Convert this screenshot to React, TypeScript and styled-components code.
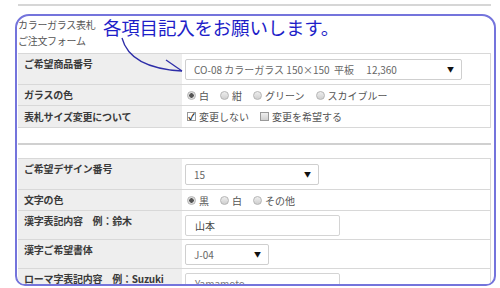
import React from 'react';
import styled, { createGlobalStyle } from 'styled-components';

const GlobalStyle = createGlobalStyle`
  html, body {
    margin: 0;
    padding: 0;
    background: #ffffff;
  }
  body {
    font-family: 'Noto Sans CJK JP', 'Liberation Sans', sans-serif;
    color: #333;
  }
`;

type Option = { label: string; checked?: boolean };

export default function App() {
  return (
    <>
      <GlobalStyle />
      <Page>
        <TopRule />
        <Frame>
          <Header>
            <div>カラーガラス表札</div>
            <div>ご注文フォーム</div>
          </Header>

          <Table>
            <Row $h={31}>
              <Label>ご希望商品番号</Label>
              <Cell>
                <Select $w={277}>
                  <span>{'CO-08 カラーガラス 150×150  平板　 12,360'}</span>
                  <Caret>▼</Caret>
                </Select>
              </Cell>
            </Row>
            <Row $h={21}>
              <Label $center>ガラスの色</Label>
              <Cell>
                <Choices
                  kind="radio"
                  options={[
                    { label: '白', checked: true },
                    { label: '紺' },
                    { label: 'グリーン' },
                    { label: 'スカイブルー' },
                  ]}
                />
              </Cell>
            </Row>
            <Row $h={22}>
              <Label $center>表札サイズ変更について</Label>
              <Cell>
                <Choices
                  kind="check"
                  options={[{ label: '変更しない', checked: true }, { label: '変更を希望する' }]}
                />
              </Cell>
            </Row>
          </Table>

          <Divider />

          <Table>
            <Row $h={31}>
              <Label>ご希望デザイン番号</Label>
              <Cell>
                <Select $w={134}>
                  <span>15</span>
                  <Caret>▼</Caret>
                </Select>
              </Cell>
            </Row>
            <Row $h={21}>
              <Label $center>文字の色</Label>
              <Cell>
                <Choices
                  kind="radio"
                  options={[{ label: '黒', checked: true }, { label: '白' }, { label: 'その他' }]}
                />
              </Cell>
            </Row>
            <Row $h={29}>
              <Label>漢字表記内容　例：鈴木</Label>
              <Cell>
                <Input $dark>山本</Input>
              </Cell>
            </Row>
            <Row $h={29}>
              <Label>漢字ご希望書体</Label>
              <Cell>
                <Select $w={84}>
                  <span>J-04</span>
                  <Caret>▼</Caret>
                </Select>
              </Cell>
            </Row>
            <Row $h={29}>
              <Label>ローマ字表記内容　例：Suzuki</Label>
              <Cell>
                <Input>Yamamoto</Input>
              </Cell>
            </Row>
          </Table>
        </Frame>

        <Note>各項目記入をお願いします。</Note>
        <Arrow width="500" height="288" viewBox="0 0 500 288">
          <path d="M122 38 C127 57 146 69 182 71" />
          <path d="M166 60 L182 71" />
        </Arrow>
      </Page>
    </>
  );
}

const Choices = ({ kind, options }: { kind: 'radio' | 'check'; options: Option[] }) => (
  <ChoiceRow>
    {options.map((o) => (
      <Choice key={o.label}>
        {kind === 'radio' ? <Radio $on={!!o.checked} /> : <Check $on={!!o.checked}>{o.checked ? '✓' : ''}</Check>}
        <span>{o.label}</span>
      </Choice>
    ))}
  </ChoiceRow>
);

const Page = styled.div`
  position: relative;
  width: 500px;
  height: 288px;
  overflow: hidden;
  background: #fff;
`;

const TopRule = styled.div`
  margin: 4px 9px 0 18px;
  height: 2px;
  background: #d6d6d6;
`;

const Frame = styled.div`
  box-sizing: border-box;
  margin: 8px 0 0 15px;
  width: 481px;
  height: 272px;
  border: 2px solid #7474dc;
  border-radius: 14px 14px 10px 10px;
  padding: 0 3px 0 1px;
  overflow: hidden;
`;

const Header = styled.div`
  height: 37px;
  padding-top: 1px;
  box-sizing: border-box;
  font-size: 10px;
  line-height: 16px;
  color: #555;
  letter-spacing: -0.3px;
`;

const Table = styled.div`
  border-top: 1px solid #d8d8d8;
  border-right: 1px solid #d8d8d8;
`;

const Row = styled.div<{ $h: number }>`
  display: grid;
  grid-template-columns: 164px 1fr;
  height: ${(p) => p.$h}px;
  box-sizing: border-box;
  border-bottom: 1px solid #d8d8d8;
`;

const Label = styled.div<{ $center?: boolean }>`
  background: #eeeeee;
  padding: ${(p) => (p.$center ? '0 6px' : '3px 6px 0')};
  display: flex;
  align-items: ${(p) => (p.$center ? 'center' : 'flex-start')};
  font-size: 10px;
  line-height: 14px;
  font-weight: 700;
  color: #3a3a3a;
  letter-spacing: -0.2px;
`;

const Cell = styled.div`
  display: flex;
  align-items: center;
  padding: 0 3px;
  background: #fff;
`;

const Select = styled.div<{ $w: number }>`
  box-sizing: border-box;
  width: ${(p) => p.$w}px;
  height: 21px;
  border: 1px solid #cfcfcf;
  border-radius: 2px;
  background: #fff;
  display: flex;
  align-items: center;
  justify-content: space-between;
  padding: 0 7px 0 8px;
  font-size: 10px;
  color: #666;
  white-space: pre;
`;

const Caret = styled.span`
  font-size: 7px;
  color: #111;
`;

const Input = styled.div<{ $dark?: boolean }>`
  box-sizing: border-box;
  width: 155px;
  height: 21px;
  border: 1px solid #d4d4d4;
  border-radius: 2px;
  display: flex;
  align-items: center;
  padding-left: 9px;
  font-size: 10px;
  color: ${(p) => (p.$dark ? '#444' : '#777')};
`;

const ChoiceRow = styled.div`
  display: flex;
  align-items: center;
  gap: 11px;
  padding-left: 2px;
  font-size: 10px;
  color: #555;
`;

const Choice = styled.label`
  display: flex;
  align-items: center;
  gap: 3px;
`;

const Radio = styled.span<{ $on: boolean }>`
  box-sizing: border-box;
  width: 9px;
  height: 9px;
  border-radius: 50%;
  border: 1px solid #b5b5b5;
  background: ${(p) =>
    p.$on ? 'radial-gradient(circle, #555 0 2px, #ddd 2.5px)' : 'linear-gradient(#eee, #cfcfcf)'};
`;

const Check = styled.span<{ $on: boolean }>`
  box-sizing: border-box;
  width: 9px;
  height: 9px;
  border: 1px solid #999;
  background: ${(p) => (p.$on ? '#fff' : 'linear-gradient(#eee, #d0d0d0)')};
  font-size: 9px;
  line-height: 7px;
  color: #222;
  text-align: center;
  font-weight: 700;
`;

const Divider = styled.div`
  margin: 15px 0 13px;
  height: 2px;
  background: #d0d0d0;
`;

const Note = styled.div`
  position: absolute;
  left: 103px;
  top: 16px;
  font-size: 18.5px;
  line-height: 22px;
  color: #1e1ec8;
  letter-spacing: -0.2px;
`;

const Arrow = styled.svg`
  position: absolute;
  left: 0;
  top: 0;
  pointer-events: none;
  fill: none;
  stroke: #2d2da8;
  stroke-width: 1.3;
`;
